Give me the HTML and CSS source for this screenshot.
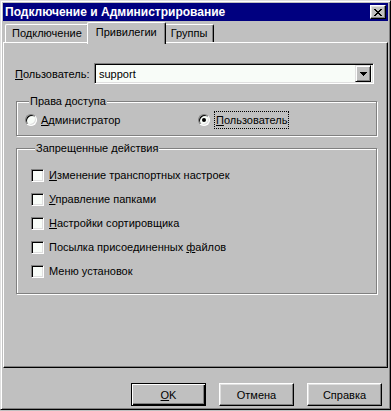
FILE: index.html
```html
<!DOCTYPE html>
<html lang="ru">
<head>
    <meta charset="UTF-8">
    <title>Подключение и Администрирование</title>
    <link rel="stylesheet" href="styles.css">
</head>
<body>
    <div class="window">
        <div class="titlebar">
            <span class="title">Подключение и Администрирование</span>
            <button class="close">
                <svg width="8" height="7" viewBox="0 0 8 7" shape-rendering="crispEdges">
                    <path d="M0 0h2v1H0z M6 0h2v1H6z M1 1h2v1H1z M5 1h2v1H5z M2 2h4v1H2z M3 3h2v1H3z M2 4h4v1H2z M1 5h2v1H1z M5 5h2v1H5z M0 6h2v1H0z M6 6h2v1H6z" fill="#000"/>
                </svg>
            </button>
        </div>

        <div class="tabs">
            <div class="tab">Подключение</div>
            <div class="tab active">Привилегии</div>
            <div class="tab">Группы</div>
        </div>

        <div class="panel">
            <div class="user-row">
                <span class="user-label"><u>П</u>ользователь:</span>
                <div class="combo">
                    <span class="combo-value">support</span>
                    <span class="combo-btn">
                        <svg width="7" height="4" viewBox="0 0 7 4" shape-rendering="crispEdges">
                            <path d="M0 0h7v1H0z M1 1h5v1H1z M2 2h3v1H2z M3 3h1v1H3z" fill="#000"/>
                        </svg>
                    </span>
                </div>
            </div>

            <fieldset class="group access">
                <legend>Права доступа</legend>
                <div class="radio-row">
                    <label class="radio"><span class="radio-box"></span><span><u>А</u>дминистратор</span></label>
                    <label class="radio checked"><span class="radio-box"></span><span class="focus"><u>П</u>ользователь</span></label>
                </div>
            </fieldset>

            <fieldset class="group denied">
                <legend>Запрещенные действия</legend>
                <label class="check"><span class="check-box"></span><span><u>И</u>зменение транспортных настроек</span></label>
                <label class="check"><span class="check-box"></span><span><u>У</u>правление папками</span></label>
                <label class="check"><span class="check-box"></span><span><u>Н</u>астройки сортировщика</span></label>
                <label class="check"><span class="check-box"></span><span>Посылка присоединенных <u>ф</u>айлов</span></label>
                <label class="check"><span class="check-box"></span><span>Меню установок</span></label>
            </fieldset>
        </div>

        <div class="buttons">
            <button class="btn default"><u>O</u>K</button>
            <button class="btn">Отмена</button>
            <button class="btn">Справка</button>
        </div>
    </div>
</body>
</html>
```

FILE: styles.css
```css
body {
    margin: 0;
    font-family: "Liberation Sans", Arial, sans-serif;
    font-size: 11px;
    background-color: #c0c0c0;
    color: #000;
}
u {
    text-decoration: underline;
    text-underline-offset: 1px;
}
.window {
    height: 410px;
    box-sizing: border-box;
    display: flex;
    flex-direction: column;
    padding: 2px;
    border: 1px solid;
    border-color: #dfdfdf #000 #000 #dfdfdf;
    box-shadow: inset 1px 1px #fff, inset -1px -1px #808080;
    background-color: #c0c0c0;
}
.titlebar {
    height: 18px;
    display: flex;
    align-items: center;
    justify-content: space-between;
    padding: 0 2px 0 2px;
    background-color: #000080;
    color: #fff;
    font-weight: bold;
    font-size: 12px;
}
.close {
    width: 16px;
    height: 14px;
    padding: 0;
    display: flex;
    align-items: center;
    justify-content: center;
    background-color: #c0c0c0;
    border: 1px solid;
    border-color: #fff #000 #000 #fff;
    box-shadow: inset -1px -1px #808080, inset 1px 1px #dfdfdf;
}

/* tabs */
.tabs {
    height: 20px;
    margin-top: 1px;
    padding-left: 2px;
    display: flex;
    align-items: flex-end;
}
.tab {
    height: 18px;
    box-sizing: border-box;
    padding: 0 6px;
    line-height: 16px;
    border: 1px solid;
    border-bottom: none;
    border-color: #fff #000 #000 #fff;
    border-radius: 2px 2px 0 0;
    box-shadow: inset -1px 0 #808080;
}
.tab.active {
    position: relative;
    z-index: 1;
    height: 22px;
    margin: 0 -2px -2px;
    padding: 0 8px;
    line-height: 18px;
    background-color: #c0c0c0;
}

/* panel */
.panel {
    height: 326px;
    box-sizing: border-box;
    padding: 20px 0 0 12px;
    border: 1px solid;
    border-color: #fff #000 #000 #fff;
    box-shadow: inset -1px -1px #808080;
}
.user-row {
    display: flex;
    align-items: center;
}
.user-label {
    width: 79px;
    margin-left: -1px;
}
.combo {
    width: 280px;
    height: 21px;
    box-sizing: border-box;
    display: flex;
    align-items: center;
    justify-content: space-between;
    padding: 2px;
    border: 1px solid;
    border-color: #808080 #fff #fff #808080;
    box-shadow: inset 1px 1px #000, inset -1px -1px #dfdfdf;
    background-color: #f8fcf8;
}
.combo-value {
    padding-left: 2px;
}
.combo-btn {
    width: 16px;
    height: 17px;
    box-sizing: border-box;
    display: flex;
    align-items: center;
    justify-content: center;
    background-color: #c0c0c0;
    border: 1px solid;
    border-color: #dfdfdf #000 #000 #dfdfdf;
    box-shadow: inset 1px 1px #fff, inset -1px -1px #808080;
}

/* group boxes */
.group {
    width: 361px;
    box-sizing: border-box;
    margin: 0;
    padding: 0;
    border: 1px solid #808080;
    box-shadow: inset 1px 1px #fff, 1px 1px #fff;
}
.group legend {
    margin-left: 4px;
    padding: 0 1px;
    line-height: 13px;
    background-color: #c0c0c0;
}
.access {
    margin-top: 11px;
    padding: 4px 0 7px 8px;
}
.denied {
    margin-top: 6px;
    padding: 8px 0 10px 14px;
}
.radio-row {
    display: flex;
    height: 16px;
    align-items: center;
}
.radio {
    display: flex;
    align-items: center;
    width: 173px;
}
.radio-box {
    position: relative;
    width: 12px;
    height: 12px;
    box-sizing: border-box;
    margin-right: 4px;
    border: 1px solid;
    border-color: #808080 #fff #fff #808080;
    border-radius: 50%;
    box-shadow: inset 1px 1px #000, inset -1px -1px #dfdfdf;
    background-color: #f8fcf8;
}
.radio.checked .radio-box::after {
    content: "";
    position: absolute;
    left: 3px;
    top: 3px;
    width: 4px;
    height: 4px;
    border-radius: 50%;
    background-color: #000;
}
.focus {
    padding: 1px 1px;
    line-height: 14px;
    border: 1px dotted #000;
}
.check {
    display: flex;
    align-items: center;
    height: 24px;
}
.check-box {
    width: 13px;
    height: 13px;
    box-sizing: border-box;
    margin-right: 5px;
    border: 1px solid;
    border-color: #808080 #fff #fff #808080;
    box-shadow: inset 1px 1px #000, inset -1px -1px #dfdfdf;
    background-color: #f8fcf8;
}

/* bottom buttons */
.buttons {
    display: flex;
    justify-content: flex-end;
    gap: 13px;
    padding: 15px 6px 0 0;
}
.btn {
    width: 75px;
    height: 23px;
    padding: 0;
    font-family: "Liberation Sans", Arial, sans-serif;
    font-size: 11px;
    color: #000;
    background-color: #c0c0c0;
    border: 1px solid;
    border-color: #fff #000 #000 #fff;
    box-shadow: inset -1px -1px #808080, inset 1px 1px #dfdfdf;
}
.btn.default {
    border-color: #000;
    box-shadow: inset 1px 1px #fff, inset -1px -1px #000, inset -2px -2px #808080;
}
```
